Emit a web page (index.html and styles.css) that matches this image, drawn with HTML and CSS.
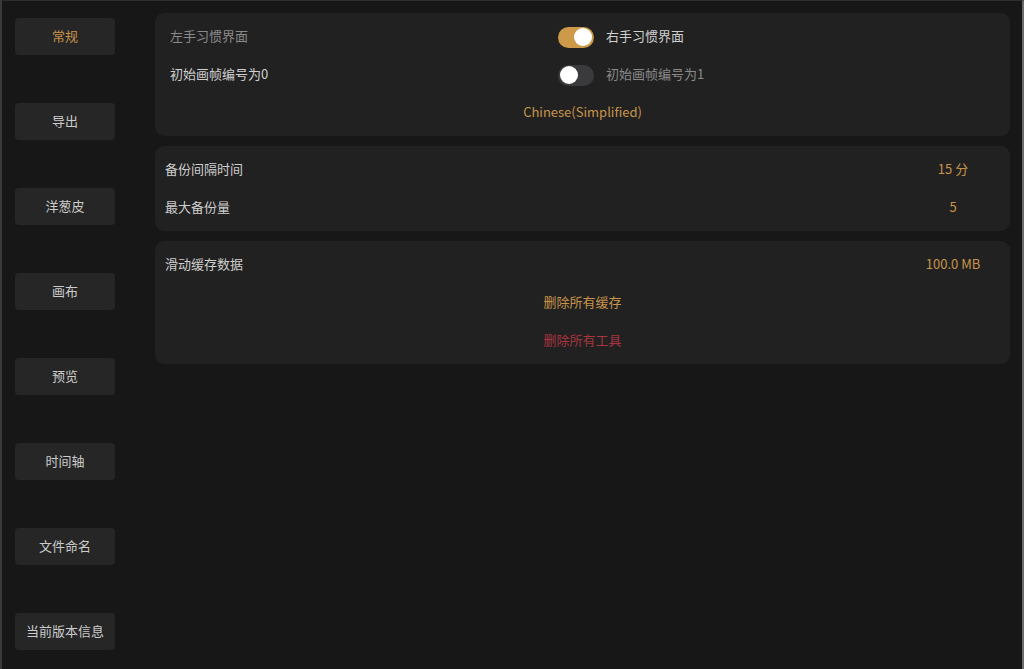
FILE: index.html
```html
<!DOCTYPE html>
<html lang="zh-CN">
<head>
  <meta charset="UTF-8">
  <meta name="viewport" content="width=device-width, initial-scale=1.0">
  <title>设置</title>
  <link rel="stylesheet" href="styles.css">
</head>
<body>
  <div class="app">
    <!-- Settings categories -->
    <nav class="sidebar">
      <button class="tab active">常规</button>
      <button class="tab">导出</button>
      <button class="tab">洋葱皮</button>
      <button class="tab">画布</button>
      <button class="tab">预览</button>
      <button class="tab">时间轴</button>
      <button class="tab">文件命名</button>
      <button class="tab">当前版本信息</button>
    </nav>

    <main class="content">
      <section class="panel">
        <div class="row split">
          <span class="label dim">左手习惯界面</span>
          <div class="option">
            <span class="toggle on"><span class="knob"></span></span>
            <span class="label">右手习惯界面</span>
          </div>
        </div>
        <div class="row split">
          <span class="label">初始画帧编号为0</span>
          <div class="option">
            <span class="toggle"><span class="knob"></span></span>
            <span class="label dim">初始画帧编号为1</span>
          </div>
        </div>
        <div class="row center">
          <span class="link">Chinese(Simplified)</span>
        </div>
      </section>

      <section class="panel compact">
        <div class="row value-row">
          <span class="label">备份间隔时间</span>
          <span class="value">15 分</span>
        </div>
        <div class="row value-row">
          <span class="label">最大备份量</span>
          <span class="value">5</span>
        </div>
      </section>

      <section class="panel compact">
        <div class="row value-row">
          <span class="label">滑动缓存数据</span>
          <span class="value">100.0 MB</span>
        </div>
        <div class="row center">
          <span class="link">删除所有缓存</span>
        </div>
        <div class="row center">
          <span class="link danger">删除所有工具</span>
        </div>
      </section>
    </main>
  </div>
</body>
</html>
```

FILE: styles.css
```css
html, body {
  margin: 0;
  height: 100%;
}
body {
  font-family: "Noto Sans CJK SC", "Noto Sans", sans-serif;
  font-size: 13px;
  background: #171717;
  color: #d0d0d0;
  box-sizing: border-box;
  border-top: 1px solid #2e2e2e;
  border-left: 2px solid #3a3a3a;
  border-right: 2px solid #6a6a6a;
}
.app {
  display: flex;
  height: 100%;
}
.sidebar {
  width: 153px;
  flex-shrink: 0;
  display: flex;
  flex-direction: column;
  gap: 48px;
  padding: 17px 0 0 13px;
  box-sizing: border-box;
}
.tab {
  width: 100px;
  height: 37px;
  border: none;
  border-radius: 4px;
  background: #262626;
  color: #cbcbcb;
  font-family: inherit;
  font-size: 13px;
  padding: 0 0 3px;
}
.tab.active {
  color: #c8944a;
}
.content {
  flex: 1;
  display: flex;
  flex-direction: column;
  gap: 10px;
  padding: 12px 12px 0 0;
}
.panel {
  background: #212121;
  border-radius: 9px;
  padding: 5px 15px 4px;
}
.panel.compact {
  padding: 5px 0 4px;
}
.row {
  height: 38px;
  display: flex;
  align-items: center;
  box-sizing: border-box;
  padding-bottom: 3px;
}
.split .label:first-child {
  width: 388px;
}
.option {
  display: flex;
  align-items: center;
  gap: 12px;
}
.label {
  color: #cfcfcf;
}
.label.dim {
  color: #8a8a8a;
}
.center {
  justify-content: center;
}
.link {
  color: #c8944a;
}
.link.danger {
  color: #a7343f;
}
.value-row {
  justify-content: space-between;
  padding: 0 17px 3px 10px;
}
.value {
  width: 80px;
  text-align: center;
  color: #c8944a;
}
.toggle {
  width: 36px;
  height: 21px;
  margin-top: 3px;
  border-radius: 11px;
  background: #3a3a3c;
  display: flex;
  align-items: center;
  padding: 0 2px;
  box-sizing: border-box;
}
.toggle.on {
  background: #cc9a48;
  justify-content: flex-end;
}
.knob {
  width: 18px;
  height: 18px;
  border-radius: 50%;
  background: #ffffff;
}
```
